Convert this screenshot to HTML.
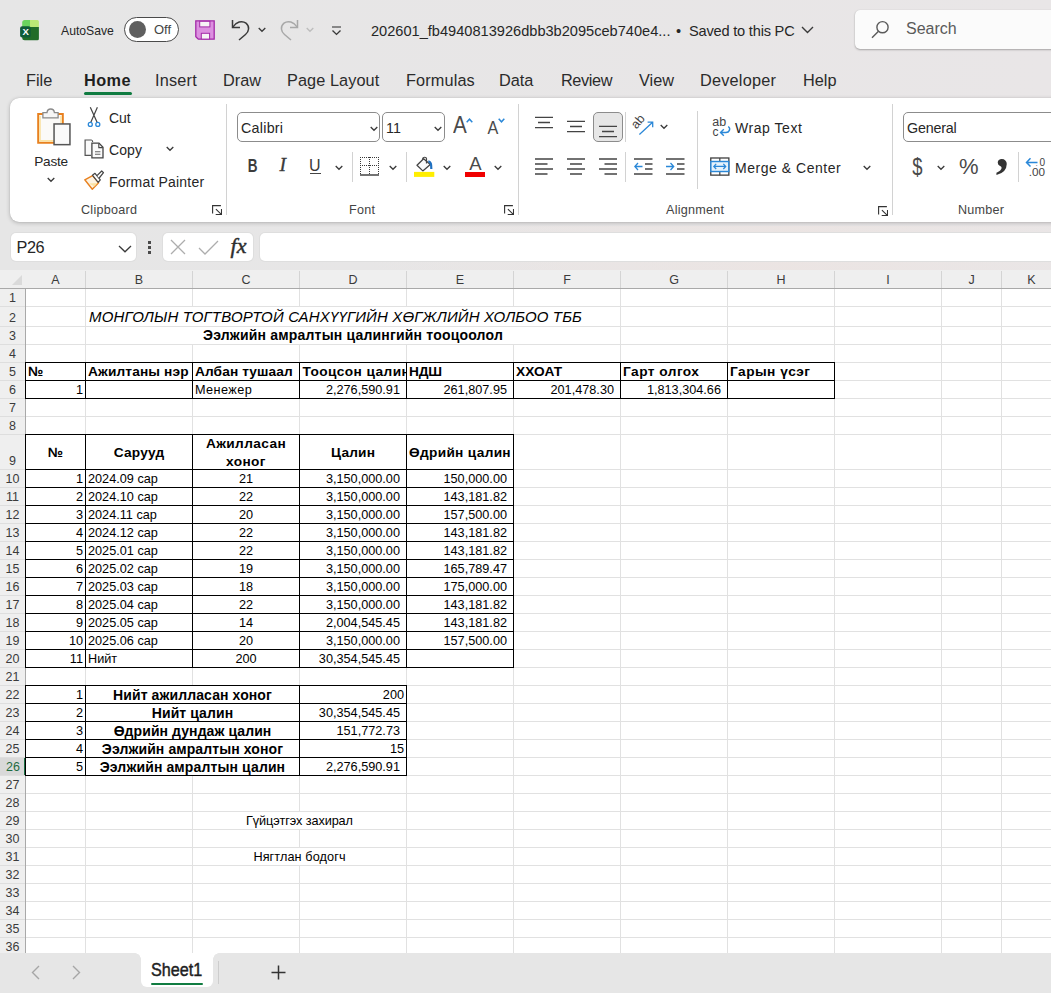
<!DOCTYPE html>
<html lang="mn">
<head>
<meta charset="utf-8">
<title>Excel</title>
<style>
html,body{margin:0;padding:0}
body{width:1051px;height:993px;overflow:hidden;background:linear-gradient(90deg,#e6e6e6,#e9e6e7);font-family:"Liberation Sans",sans-serif;position:relative;color:#262626}
#titlebar{position:absolute;left:0;top:0;width:1051px;height:60px}
#titlebar>*{position:absolute}
#xlicon{left:20px;top:19.800px}
#autosave{left:61px;top:22.800px;font-size:12.2px;line-height:16px;color:#262626}
#toggle{left:124px;top:17px;width:53px;height:23px;border:1px solid #4a4a4a;border-radius:13px;background:#fff}
#toggle b{position:absolute;left:4px;top:3px;width:17px;height:17px;border-radius:50%;background:#5f5f5f}
#toggle em{position:absolute;left:29px;top:4px;font-style:normal;font-size:13px;line-height:16px;color:#444}
#saveic{left:195px;top:20px}
#undoic{left:230.500px;top:18.500px}
#redoic{left:278.500px;top:18.500px}
#qatic{left:330.500px;top:26px}
#doctitle{left:371px;top:21.700px;font-size:14.600px;letter-spacing:0;line-height:18px;white-space:nowrap;color:#262626}
#search{left:855px;top:10px;width:220px;height:39px;background:#fbfbfb;border-radius:5px;box-shadow:0 1px 2px rgba(0,0,0,.28),0 0 1px rgba(0,0,0,.15)}
#search svg{position:absolute;left:16px;top:10px}
#search span{position:absolute;left:51px;top:9px;font-size:16px;line-height:20px;color:#5a5a5a}
#tabs{position:absolute;left:0;top:60px;width:1051px;height:38px}
#tabs span{position:absolute;top:9px;font-size:16.300px;line-height:22px;color:#2b2b2b;white-space:nowrap}
#tabs span.act{font-weight:bold;color:#1f1f1f}
#homeul{position:absolute;left:84px;top:32px;width:48px;height:3px;border-radius:2px;background:#107c41}
#doctitle em{font-style:normal;margin:0 3.800px 0 1.500px}
#doctitle b{font-weight:normal;letter-spacing:-.2px}
#ribbonbg{position:absolute;left:10px;top:98px;width:1070px;height:124px;background:#fff;border-radius:9px;box-shadow:0 1px 4px rgba(0,0,0,.22),0 0 1px rgba(0,0,0,.2)}
#rb{position:absolute;left:0;top:0;width:1051px;height:230px;overflow:hidden}
#rb>*{position:absolute}
#rb i{display:block}
.chev{position:absolute}
.rt{font-size:14px;line-height:18px;color:#262626;white-space:nowrap}
.gl{top:202.700px;font-size:12.600px;line-height:15px;color:#444;white-space:nowrap;letter-spacing:.25px}
.gs{top:104px;width:1px;height:111px;background:#d2d2d2}
.ss{width:1px;height:30px;background:#d2d2d2}
.box{border:1px solid #8c8c8c;border-radius:5px;background:#fff;box-sizing:border-box}
.box span{position:absolute;left:3px;top:5.600px;font-size:14.300px;line-height:18px;color:#262626;}
.selbox{border:1px solid #8c8c8c;border-radius:5px;background:#e6e6e6;box-sizing:border-box}
.ic{color:#3a3a3a;white-space:nowrap}
.thin{color:#4a4a4a}
#fbar{position:absolute;left:0;top:226px;width:1051px;height:44px;background:linear-gradient(90deg,rgba(236,228,226,0) 35%,rgba(236,228,226,.8) 75%,rgba(236,228,226,.2) 100%)}
#namebox{position:absolute;left:10.600px;top:7px;width:125.600px;height:28px;background:#fff;border-radius:5px;box-shadow:0 0 0 1px #dedede}
#namebox span{position:absolute;left:6px;top:4.700px;font-size:16.300px;line-height:19px;color:#262626;letter-spacing:-.45px}
#namebox svg{position:absolute;left:107px;top:12px}
#dots{position:absolute;left:147.700px;top:15px;width:4px;height:13px}
#dots i{display:block;width:3.500px;height:3.300px;background:#4a4a4a;margin-bottom:1.600px}
#fbtns{position:absolute;left:162.500px;top:7px;width:90.500px;height:28px;background:#fff;border-radius:5px;box-shadow:0 0 0 1px #dedede}
#fbtns svg{position:absolute}
#fx{position:absolute;left:68px;top:1px;-webkit-text-stroke:.45px #2e2e2e;font-family:"Liberation Serif",serif;font-style:italic;font-size:22px;line-height:24px;color:#2e2e2e;letter-spacing:0}
#fx em{font-style:italic}
#finput{position:absolute;left:260px;top:7px;width:820px;height:28px;background:#fff;border-radius:5px;box-shadow:0 0 0 1px #dedede}
#sbar{position:absolute;left:0;top:953px;width:1051px;height:40px;background:#e6e6e6}
#sbar>*{position:absolute}
#stab{left:141px;top:0;width:72px;height:34px;background:#fff;border-radius:0 0 6px 6px}
#stab span{position:absolute;left:9.800px;top:6.300px;font-size:18px;line-height:22px;color:#1f1f1f;-webkit-text-stroke:.45px #1f1f1f;letter-spacing:0;white-space:nowrap;transform:scaleX(.9);transform-origin:0 50%}
#stab i{position:absolute;left:10px;top:29.500px;width:52px;height:2px;background:#107c41;border-radius:1px}
#ssep{left:218px;top:8px;width:1px;height:23px;background:#cdcdcd}
#stab:before,#stab:after{content:"";position:absolute;top:0;width:6px;height:6px}
#stab:before{left:-6px;background:radial-gradient(circle at 0 100%,rgba(255,255,255,0) 5.500px,#fff 6px)}
#stab:after{right:-6px;background:radial-gradient(circle at 100% 100%,rgba(255,255,255,0) 5.500px,#fff 6px)}

#grid{position:absolute;left:0;top:270px;width:1051px;height:683px;background:#fff;overflow:hidden;font-family:"Liberation Sans",sans-serif;color:#000}
#grid i{position:absolute;display:block}
.gv{top:0;width:1px;height:683px;background:#e1e1e1}
.gh{left:0;height:1px;width:1051px;background:#e1e1e1}
#colhdr{position:absolute;z-index:2;left:0;top:0;width:1051px;height:18px;background:#efefef;border-bottom:1px solid #a9a9a9}
.ch{position:absolute;top:0;height:18px;line-height:21px;text-align:center;font-size:12.5px;color:#3b3b3b}
.chs{top:1px;width:1px;height:17px;background:#d4d4d4}
#selall{position:absolute;left:12px;top:4.700px}
#rowhdr{position:absolute;left:0;top:0;width:25px;height:683px;background:#efefef;border-right:1px solid #a9a9a9}
.rh{position:absolute;left:0;width:25px;text-align:center;font-size:12.5px;color:#3b3b3b}
.rh.sel{background:#d9d9d9;color:#1e6b41;box-shadow:inset -2px 0 0 #1e7145;width:26px}
.rhs{left:0;width:25px;height:1px;background:#dedede}
.c{position:absolute;white-space:nowrap;overflow:hidden;display:flex;align-items:flex-end}
.c span{display:block;width:100%}
.cb{font-size:12.7px;line-height:16px}
.tx{letter-spacing:0}
.ab{font-size:13.7px;font-weight:bold;line-height:16px}
.a14{font-size:14px}
.wrap{line-height:17.5px}
.ti{font-size:15px;letter-spacing:.15px;font-style:italic;line-height:18px;overflow:visible}
.ti span{padding-left:3px}
.lft span{text-align:left;padding-left:2px}
.rgt span{text-align:right;padding-right:2px}
.acc span{text-align:right;padding-right:6px}
.ctr span{text-align:center}
.mid{align-items:center;padding-top:1.4px;box-sizing:border-box}
.bg{background:#fff}
.bh{height:1px;background:#000}
.bv{width:1px;background:#000}
</style>
</head>
<body>
<div id="titlebar">
  <svg id="xlicon" width="20" height="21" viewBox="0 0 20 21">
    <path d="M2.200 2.500Q2.200 0 4.700 0H10V7H2.200Z" fill="#6ad45e"/>
    <path d="M10 0H17.400Q18.900 0 18.900 1.500V7H10Z" fill="#bce876"/>
    <path d="M2.200 7H18.900V18.700Q18.900 20.200 17.400 20.200H4.700Q2.200 20.200 2.200 17.700Z" fill="#216c28"/>
    <rect x=".1" y="6.300" width="10.600" height="11.200" rx="2" fill="#0f5c38"/>
    <text x="5.700" y="15.200" text-anchor="middle" font-family="Liberation Sans,sans-serif" font-weight="bold" font-size="9.600" fill="#fff">X</text>
  </svg>
  <span id="autosave">AutoSave</span>
  <span id="toggle"><b></b><em>Off</em></span>
  <svg id="saveic" width="21" height="21" viewBox="0 0 21 21">
    <path d="M.8 .8H19.200V19.200H3.300L.8 16.700Z" fill="#dc90e0" stroke="#a32aa8" stroke-width="1.300" stroke-linejoin="miter"/>
    <rect x="4.700" y="1.300" width="10.200" height="5.600" fill="#f6f3f6" stroke="#a32aa8" stroke-width="1"/>
    <rect x="6.300" y="13.300" width="8.300" height="5.800" fill="#f6f3f6" stroke="#a32aa8" stroke-width="1"/>
  </svg>
  <svg id="undoic" width="20" height="22" viewBox="0 0 20 22">
    <path d="M1.500 1V8.500H9" fill="none" stroke="#3a3a3a" stroke-width="1.500"/>
    <path d="M1.800 8.200C5 3 11 1 15 4.200C19 7.500 18 12.500 14.500 15.500L8 21" fill="none" stroke="#3a3a3a" stroke-width="1.500"/>
  </svg>
  <svg class="chev" style="left:258px;top:27px" width="8" height="6" viewBox="0 0 8 6"><path d="M.7 1L4 4.300L7.300 1" fill="none" stroke="#3a3a3a" stroke-width="1.300"/></svg>
  <svg id="redoic" width="20" height="22" viewBox="0 0 20 22">
    <path d="M18.500 1V8.500H11" fill="none" stroke="#a8a8a8" stroke-width="1.500"/>
    <path d="M18.200 8.200C15 3 9 1 5 4.200C1 7.500 2 12.500 5.500 15.500L12 21" fill="none" stroke="#a8a8a8" stroke-width="1.500"/>
  </svg>
  <svg class="chev" style="left:306px;top:27px" width="8" height="6" viewBox="0 0 8 6"><path d="M.7 1L4 4.300L7.300 1" fill="none" stroke="#bdbdbd" stroke-width="1.300"/></svg>
  <svg id="qatic" width="11" height="10" viewBox="0 0 11 10"><path d="M1 1H10" stroke="#3a3a3a" stroke-width="1.100"/><path d="M1.500 4.600L5.500 8.400L9.500 4.600" fill="none" stroke="#3a3a3a" stroke-width="1.400"/></svg>
  <span id="doctitle">202601_fb4940813926dbb3b2095ceb740e4... <em>•</em> <b>Saved to this PC</b></span>
  <svg class="chev" style="left:801px;top:26px" width="13" height="8" viewBox="0 0 13 8"><path d="M1 1L6.500 6.500L12 1" fill="none" stroke="#3a3a3a" stroke-width="1.400"/></svg>
  <div id="search">
    <svg width="19" height="19" viewBox="0 0 19 19"><circle cx="11.500" cy="7.200" r="5.600" fill="none" stroke="#5a5a5a" stroke-width="1.400"/><path d="M7.500 11.200L1 17.800" stroke="#5a5a5a" stroke-width="1.400"/></svg>
    <span>Search</span>
  </div>
</div>
<div id="tabs">
  <span style="left:26px">File</span>
  <span class="act" style="left:84px;letter-spacing:.4px">Home</span>
  <span style="left:155px;letter-spacing:.2px">Insert</span>
  <span style="left:223px">Draw</span>
  <span style="left:287px;letter-spacing:.08px">Page Layout</span>
  <span style="left:406px;letter-spacing:.12px">Formulas</span>
  <span style="left:499px">Data</span>
  <span style="left:561px;letter-spacing:-.4px">Review</span>
  <span style="left:639px">View</span>
  <span style="left:700px;letter-spacing:.2px">Developer</span>
  <span style="left:803px">Help</span>
  <i id="homeul"></i>
</div>
<div id="ribbonbg"></div>
<div id="rb">
  <!-- Clipboard -->
  <svg style="left:36px;top:106px" width="36" height="41" viewBox="0 0 36 41">
    <path d="M2.200 8H26.800V36.700H2.200Z" fill="#fbfaf8" stroke="#e8801f" stroke-width="2"/>
    <path d="M4 10V34.900H20M25 10V17" fill="none" stroke="#fbe2a2" stroke-width="1.600"/>
    <path d="M6.900 11.800V6.600H11C11.500 1.800 17.900 1.800 18.400 6.600H22.100V11.800Z" fill="#f6f6f6" stroke="#8a8a8a" stroke-width="1.300"/>
    <rect x="18.050" y="17.950" width="15.900" height="20.700" fill="#fafafa" stroke="#555" stroke-width="1.500"/>
  </svg>
  <span class="rt" style="left:34.300px;top:153px;font-size:13.600px;letter-spacing:-.25px">Paste</span>
  <svg class="chev" style="left:46.500px;top:176.500px" width="8" height="6" viewBox="0 0 8 6"><path d="M.7 1L4 4.300L7.300 1" fill="none" stroke="#3a3a3a" stroke-width="1.300"/></svg>
  <svg style="left:86px;top:106px" width="16" height="22" viewBox="0 0 16 22">
    <path d="M4.300 1.200L11.200 16.400M11.400 1.200L4.700 16.400" stroke="#444" stroke-width="1.200" fill="none"/>
    <circle cx="4.300" cy="18.400" r="2" fill="none" stroke="#2b88d8" stroke-width="1.300"/>
    <circle cx="11.800" cy="18.400" r="2" fill="none" stroke="#2b88d8" stroke-width="1.300"/>
  </svg>
  <span class="rt" style="left:109px;top:109px;letter-spacing:-.13px">Cut</span>
  <svg style="left:83px;top:138px" width="22" height="22" viewBox="0 0 22 22">
    <path d="M8 17.400H2.100V2H8.300Q9.600 2 9.700 4" fill="#fafafa" stroke="#555" stroke-width="1.200"/>
    <path d="M8.900 5.100H16L20 9.300V19.900H8.900Z" fill="#fafafa" stroke="#444" stroke-width="1.300"/>
    <path d="M15.800 5.400V9.600H19.800" fill="none" stroke="#444" stroke-width="1.100"/>
    <path d="M12 13.700H17.400M12 16.300H17.400" stroke="#666" stroke-width="1.100"/>
  </svg>
  <span class="rt" style="left:109px;top:141px;letter-spacing:.1px">Copy</span>
  <svg class="chev" style="left:166px;top:146px" width="8" height="6" viewBox="0 0 8 6"><path d="M.7 1L4 4.300L7.300 1" fill="none" stroke="#3a3a3a" stroke-width="1.300"/></svg>
  <svg style="left:84px;top:170px" width="21" height="21" viewBox="0 0 21 21">
    <path d="M.8 9.800L8.600 5.600L14.600 12.700L8.300 19.200Z" fill="#fdf3e2" stroke="#e8801f" stroke-width="1.400" stroke-linejoin="round"/>
    <path d="M5 13.500L10.500 16.500L13.500 13Z" fill="#fbe2a2"/>
    <path d="M8.400 5.200L11 3.300L16.300 9.800L14.200 12.300Z" fill="#fff" stroke="#444" stroke-width="1.200" stroke-linejoin="round"/>
    <path d="M13 5.700L17.700 1L19.500 2.700L15.200 8" fill="#fff" stroke="#444" stroke-width="1.200" stroke-linejoin="round"/>
  </svg>
  <span class="rt" style="left:109px;top:173px;letter-spacing:.19px">Format Painter</span>
  <span class="gl" style="left:81px">Clipboard</span>
  <svg class="dl" style="left:212px;top:205px" width="10" height="10" viewBox="0 0 10 10"><path d="M.6 8.600V.6H8.900" fill="none" stroke="#333" stroke-width="1.100"/><path d="M3.900 4.100L9.300 9.300M9.500 4.100V9.500H3.700" fill="none" stroke="#333" stroke-width="1.100"/></svg>
  <i class="gs" style="left:226px"></i>
  <!-- Font -->
  <div class="box" style="left:237px;top:112px;width:143px;height:29.500px"><span style="letter-spacing:.25px">Calibri</span>
    <svg class="chev" style="left:132px;top:12.500px" width="8" height="6" viewBox="0 0 8 6"><path d="M.7 1L4 4.300L7.300 1" fill="none" stroke="#3a3a3a" stroke-width="1.300"/></svg></div>
  <div class="box" style="left:382px;top:112px;width:62.500px;height:29.500px"><span>11</span>
    <svg class="chev" style="left:51px;top:12.500px" width="8" height="6" viewBox="0 0 8 6"><path d="M.7 1L4 4.300L7.300 1" fill="none" stroke="#3a3a3a" stroke-width="1.300"/></svg></div>
  <span class="ic thin" style="left:452.300px;top:112px;font-size:23.700px;line-height:26px;transform:scaleX(.87)">A</span>
  <svg style="left:465.500px;top:117.500px" width="7" height="5" viewBox="0 0 7 5"><path d="M.7 4.200L3.500 1.200L6.300 4.200" fill="none" stroke="#2b88d8" stroke-width="1.500"/></svg>
  <span class="ic thin" style="left:486.800px;top:116.700px;font-size:18px;line-height:22px;transform:scaleX(.9)">A</span>
  <svg style="left:497.500px;top:117.500px" width="7" height="5" viewBox="0 0 7 5"><path d="M.7 .8L3.500 3.800L6.300 .8" fill="none" stroke="#2b88d8" stroke-width="1.500"/></svg>
  <span class="ic" style="left:245.500px;top:154.500px;font-size:18.300px;line-height:22px;font-weight:bold;transform:scaleX(.74);color:#3d3d3d">B</span>
  <span class="ic" style="left:279.500px;top:153.300px;font-size:19.500px;line-height:24px;font-style:italic;font-family:'Liberation Serif',serif;-webkit-text-stroke:.3px #3a3a3a">I</span>
  <span class="ic" style="left:309px;top:156px;font-size:16px;line-height:20px">U</span>
  <i style="left:309.600px;top:172.800px;width:11.400px;height:1.400px;background:#444"></i>
  <svg class="chev" style="left:335px;top:165px" width="8" height="6" viewBox="0 0 8 6"><path d="M.7 1L4 4.300L7.300 1" fill="none" stroke="#3a3a3a" stroke-width="1.300"/></svg>
  <i class="ss" style="left:352px;top:152px"></i>
  <svg style="left:360px;top:157px" width="19" height="19" viewBox="0 0 19 19">
    <path d="M0 .5H19M0 8.500H19M.5 0V17M9.500 0V17M18.500 0V17" fill="none" stroke="#3a3a3a" stroke-width="1" stroke-dasharray="1 1"/>
    <path d="M0 18H19" stroke="#444" stroke-width="1.500"/>
  </svg>
  <svg class="chev" style="left:389px;top:165px" width="8" height="6" viewBox="0 0 8 6"><path d="M.7 1L4 4.300L7.300 1" fill="none" stroke="#3a3a3a" stroke-width="1.300"/></svg>
  <i class="ss" style="left:406px;top:152px"></i>
  <svg style="left:414px;top:156px" width="21" height="22" viewBox="0 0 21 22">
    <path d="M3 9.300L9.600 2.800L16.300 8.400L8.800 14.900Z" fill="#fafafa" stroke="#444" stroke-width="1.300" stroke-linejoin="round"/>
    <path d="M8.700 3.800V2.800C8.700 .7 12.500 .7 12.500 2.800V7.400" fill="none" stroke="#444" stroke-width="1.200"/>
    <path d="M14.300 5.300C16.800 5.900 17.400 7.600 17.300 13" fill="none" stroke="#1e6fc0" stroke-width="2.200"/>
    <rect x="0" y="15.900" width="20.300" height="5" fill="#ffee00"/>
  </svg>
  <svg class="chev" style="left:443px;top:165px" width="8" height="6" viewBox="0 0 8 6"><path d="M.7 1L4 4.300L7.300 1" fill="none" stroke="#3a3a3a" stroke-width="1.300"/></svg>
  <span class="ic thin" style="left:469.300px;top:153.400px;font-size:18.500px;line-height:22px">A</span>
  <i style="left:465px;top:172px;width:20.300px;height:5px;background:#f00000"></i>
  <svg class="chev" style="left:494px;top:165px" width="8" height="6" viewBox="0 0 8 6"><path d="M.7 1L4 4.300L7.300 1" fill="none" stroke="#3a3a3a" stroke-width="1.300"/></svg>
  <span class="gl" style="left:349px">Font</span>
  <svg class="dl" style="left:504px;top:205px" width="10" height="10" viewBox="0 0 10 10"><path d="M.6 8.600V.6H8.900" fill="none" stroke="#333" stroke-width="1.100"/><path d="M3.900 4.100L9.300 9.300M9.500 4.100V9.500H3.700" fill="none" stroke="#333" stroke-width="1.100"/></svg>
  <i class="gs" style="left:518px"></i>
  <!-- Alignment -->
  <svg style="left:535px;top:116px" width="18" height="14" viewBox="0 0 18 14"><path d="M0 1.300H18M3 6.500H15M0 11.700H18" stroke="#444" stroke-width="1.300"/></svg>
  <svg style="left:567px;top:120px" width="18" height="14" viewBox="0 0 18 14"><path d="M0 1.300H18M3 6.500H15M0 11.700H18" stroke="#444" stroke-width="1.300"/></svg>
  <div class="selbox" style="left:593px;top:112px;width:30px;height:29.500px"></div>
  <svg style="left:599px;top:125px" width="18" height="14" viewBox="0 0 18 14"><path d="M0 1.300H18M3 6.500H15M0 11.700H18" stroke="#444" stroke-width="1.300"/></svg>
  <i class="ss" style="left:625px;top:112px"></i>
  <svg style="left:632px;top:115px" width="23" height="23" viewBox="0 0 23 23">
    <path d="M7.400 19.600L20.600 7.300M15.600 7.200H20.700V12.300" fill="none" stroke="#2b88d8" stroke-width="1.300"/>
    <text x="0" y="0" transform="translate(4.600 14.600) rotate(-50)" font-family="Liberation Sans,sans-serif" font-size="12.500" fill="#444">ab</text>
  </svg>
  <svg class="chev" style="left:660px;top:124px" width="8" height="6" viewBox="0 0 8 6"><path d="M.7 1L4 4.300L7.300 1" fill="none" stroke="#3a3a3a" stroke-width="1.300"/></svg>
  <svg style="left:535px;top:158px" width="18" height="17" viewBox="0 0 18 17"><path d="M0 1H18M0 6H12.500M0 11H18M0 16H12.500" stroke="#444" stroke-width="1.300"/></svg>
  <svg style="left:567px;top:158px" width="18" height="17" viewBox="0 0 18 17"><path d="M0 1H18M3 6H15M0 11H18M3 16H15" stroke="#444" stroke-width="1.300"/></svg>
  <svg style="left:599px;top:158px" width="18" height="17" viewBox="0 0 18 17"><path d="M0 1H18M5.500 6H18M0 11H18M5.500 16H18" stroke="#444" stroke-width="1.300"/></svg>
  <i class="ss" style="left:625px;top:152px"></i>
  <svg style="left:634px;top:158px" width="19" height="17" viewBox="0 0 19 17"><path d="M0 1H18.500M11 6H18.500M11 11H18.500M0 16H18.500" stroke="#444" stroke-width="1.300"/><path d="M8.500 8.500H.8M4 5L.8 8.500L4 12" fill="none" stroke="#2b88d8" stroke-width="1.300"/></svg>
  <svg style="left:666px;top:158px" width="19" height="17" viewBox="0 0 19 17"><path d="M0 1H18.500M11 6H18.500M11 11H18.500M0 16H18.500" stroke="#444" stroke-width="1.300"/><path d="M0 8.500H7.700M4.500 5L7.700 8.500L4.500 12" fill="none" stroke="#2b88d8" stroke-width="1.300"/></svg>
  <i class="ss" style="left:697px;top:111px;height:78px"></i>
  <svg style="left:712px;top:117px" width="20" height="21" viewBox="0 0 20 21">
    <text x="0.300" y="9" font-family="Liberation Sans,sans-serif" font-size="12.500" fill="#444">ab</text>
    <text x="0.500" y="18.500" font-family="Liberation Sans,sans-serif" font-size="12" fill="#444">c</text>
    <path d="M16.200 9.500C19 11.500 17.500 15.800 13.500 15.500H8.500M11.800 12.200L8.500 15.500L11.800 18.800" fill="none" stroke="#2b88d8" stroke-width="1.400"/>
  </svg>
  <span class="rt" style="left:735px;top:119px;letter-spacing:.54px">Wrap Text</span>
  <svg style="left:709.500px;top:157px" width="20" height="19.500" viewBox="0 0 21 20">
    <rect x=".8" y=".8" width="19" height="18" fill="#fff" stroke="#444" stroke-width="1.400"/>
    <path d="M10.300 .8V4.500M10.300 15V18.800" stroke="#444" stroke-width="1.300"/>
    <rect x=".9" y="4.500" width="18.800" height="10.500" fill="#e6f2fb" stroke="#2b88d8" stroke-width="1.500"/>
    <path d="M4 9.700H16.500M6.500 7L4 9.700L6.500 12.400M14 7L16.500 9.700L14 12.400" fill="none" stroke="#2b88d8" stroke-width="1.300"/>
  </svg>
  <span class="rt" style="left:735px;top:159px;letter-spacing:.53px">Merge &amp; Center</span>
  <svg class="chev" style="left:863px;top:165px" width="8" height="6" viewBox="0 0 8 6"><path d="M.7 1L4 4.300L7.300 1" fill="none" stroke="#3a3a3a" stroke-width="1.300"/></svg>
  <span class="gl" style="left:666px">Alignment</span>
  <svg class="dl" style="left:878px;top:206px" width="10" height="10" viewBox="0 0 10 10"><path d="M.6 8.600V.6H8.900" fill="none" stroke="#333" stroke-width="1.100"/><path d="M3.900 4.100L9.300 9.300M9.500 4.100V9.500H3.700" fill="none" stroke="#333" stroke-width="1.100"/></svg>
  <i class="gs" style="left:892px"></i>
  <!-- Number -->
  <div class="box" style="left:903px;top:112px;width:170px;height:29.500px"><span style="letter-spacing:-.2px">General</span></div>
  <span class="ic thin" style="left:910.500px;top:153px;font-size:23px;line-height:28px;transform:scaleX(.8)">$</span>
  <svg class="chev" style="left:937px;top:165px" width="8" height="6" viewBox="0 0 8 6"><path d="M.7 1L4 4.300L7.300 1" fill="none" stroke="#3a3a3a" stroke-width="1.300"/></svg>
  <span class="ic thin" style="left:959px;top:154px;font-size:22px;line-height:26px">%</span>
  <span class="ic" style="left:995.800px;top:119.600px;font-size:52px;line-height:60px;font-family:'Liberation Serif',serif;font-weight:bold;color:#333">,</span>
  <i class="ss" style="left:1018px;top:152px"></i>
  <svg style="left:1025px;top:155px" width="24" height="24" viewBox="0 0 24 24">
    <path d="M12.500 7.400H1.500M5.500 3.200L1.500 7.400L5.500 11.600" fill="none" stroke="#2b88d8" stroke-width="1.500"/>
    <text x="14.600" y="10.700" font-family="Liberation Sans,sans-serif" font-size="11.800" textLength="5.600" lengthAdjust="spacingAndGlyphs" fill="#444">0</text>
    <text x="10.600" y="10.700" font-family="Liberation Sans,sans-serif" font-size="8" fill="#666">.</text>
    <text x="3.800" y="21" font-family="Liberation Sans,sans-serif" font-size="11.800" textLength="16.300" lengthAdjust="spacingAndGlyphs" fill="#444">.00</text>
  </svg>
  <span class="gl" style="left:958px">Number</span>
</div>
<div id="fbar">
  <div id="namebox"><span>P26</span>
    <svg width="14" height="8" viewBox="0 0 14 8"><path d="M1 1L7 6.800L13 1" fill="none" stroke="#3a3a3a" stroke-width="1.300"/></svg></div>
  <span id="dots"><i></i><i></i><i></i></span>
  <div id="fbtns">
    <svg style="left:7.300px;top:6.200px" width="16" height="16" viewBox="0 0 16 16"><path d="M1 1L15 15M15 1L1 15" stroke="#adadad" stroke-width="1.300"/></svg>
    <svg style="left:35px;top:6.500px" width="21" height="15" viewBox="0 0 21 15"><path d="M1 8L7 14L20 1" fill="none" stroke="#adadad" stroke-width="1.300"/></svg>
    <span id="fx"><em>f</em>x</span>
  </div>
  <div id="finput"></div>
</div>
<div id="grid">
<i class="gv" style="left:85px"></i>
<i class="gv" style="left:192px"></i>
<i class="gv" style="left:299px"></i>
<i class="gv" style="left:406px"></i>
<i class="gv" style="left:513px"></i>
<i class="gv" style="left:620px"></i>
<i class="gv" style="left:727px"></i>
<i class="gv" style="left:834px"></i>
<i class="gv" style="left:941px"></i>
<i class="gv" style="left:1001px"></i>
<i class="gh" style="top:36px"></i>
<i class="gh" style="top:56px"></i>
<i class="gh" style="top:74px"></i>
<i class="gh" style="top:92px"></i>
<i class="gh" style="top:110px"></i>
<i class="gh" style="top:128px"></i>
<i class="gh" style="top:146px"></i>
<i class="gh" style="top:164px"></i>
<i class="gh" style="top:199px"></i>
<i class="gh" style="top:217px"></i>
<i class="gh" style="top:235px"></i>
<i class="gh" style="top:253px"></i>
<i class="gh" style="top:271px"></i>
<i class="gh" style="top:289px"></i>
<i class="gh" style="top:307px"></i>
<i class="gh" style="top:325px"></i>
<i class="gh" style="top:343px"></i>
<i class="gh" style="top:361px"></i>
<i class="gh" style="top:379px"></i>
<i class="gh" style="top:397px"></i>
<i class="gh" style="top:415px"></i>
<i class="gh" style="top:433px"></i>
<i class="gh" style="top:451px"></i>
<i class="gh" style="top:469px"></i>
<i class="gh" style="top:487px"></i>
<i class="gh" style="top:505px"></i>
<i class="gh" style="top:523px"></i>
<i class="gh" style="top:541px"></i>
<i class="gh" style="top:559px"></i>
<i class="gh" style="top:577px"></i>
<i class="gh" style="top:595px"></i>
<i class="gh" style="top:613px"></i>
<i class="gh" style="top:631px"></i>
<i class="gh" style="top:649px"></i>
<i class="gh" style="top:667px"></i>
<i class="gh" style="top:685px"></i>
<div id="colhdr">
<span class="ch" style="left:26px;width:59px">A</span>
<i class="chs" style="left:85px"></i>
<span class="ch" style="left:86px;width:106px">B</span>
<i class="chs" style="left:192px"></i>
<span class="ch" style="left:193px;width:106px">C</span>
<i class="chs" style="left:299px"></i>
<span class="ch" style="left:300px;width:106px">D</span>
<i class="chs" style="left:406px"></i>
<span class="ch" style="left:407px;width:106px">E</span>
<i class="chs" style="left:513px"></i>
<span class="ch" style="left:514px;width:106px">F</span>
<i class="chs" style="left:620px"></i>
<span class="ch" style="left:621px;width:106px">G</span>
<i class="chs" style="left:727px"></i>
<span class="ch" style="left:728px;width:106px">H</span>
<i class="chs" style="left:834px"></i>
<span class="ch" style="left:835px;width:106px">I</span>
<i class="chs" style="left:941px"></i>
<span class="ch" style="left:942px;width:59px">J</span>
<i class="chs" style="left:1001px"></i>
<span class="ch" style="left:1002px;width:59px">K</span>
<i class="chs" style="left:1061px"></i>
<svg id="selall" width="10" height="10" viewBox="0 0 10 10"><path d="M10 0V10H0Z" fill="#dadada"/></svg>
</div>
<div id="rowhdr">
<span class="rh" style="top:19px;height:17px;line-height:19px">1</span>
<i class="rhs" style="top:36px"></i>
<span class="rh" style="top:37px;height:19px;line-height:23px">2</span>
<i class="rhs" style="top:56px"></i>
<span class="rh" style="top:57px;height:17px;line-height:19px">3</span>
<i class="rhs" style="top:74px"></i>
<span class="rh" style="top:75px;height:17px;line-height:19px">4</span>
<i class="rhs" style="top:92px"></i>
<span class="rh" style="top:93px;height:17px;line-height:19px">5</span>
<i class="rhs" style="top:110px"></i>
<span class="rh" style="top:111px;height:17px;line-height:19px">6</span>
<i class="rhs" style="top:128px"></i>
<span class="rh" style="top:129px;height:17px;line-height:19px">7</span>
<i class="rhs" style="top:146px"></i>
<span class="rh" style="top:147px;height:17px;line-height:19px">8</span>
<i class="rhs" style="top:164px"></i>
<span class="rh" style="top:165px;height:34px;line-height:53px">9</span>
<i class="rhs" style="top:199px"></i>
<span class="rh" style="top:200px;height:17px;line-height:19px">10</span>
<i class="rhs" style="top:217px"></i>
<span class="rh" style="top:218px;height:17px;line-height:19px">11</span>
<i class="rhs" style="top:235px"></i>
<span class="rh" style="top:236px;height:17px;line-height:19px">12</span>
<i class="rhs" style="top:253px"></i>
<span class="rh" style="top:254px;height:17px;line-height:19px">13</span>
<i class="rhs" style="top:271px"></i>
<span class="rh" style="top:272px;height:17px;line-height:19px">14</span>
<i class="rhs" style="top:289px"></i>
<span class="rh" style="top:290px;height:17px;line-height:19px">15</span>
<i class="rhs" style="top:307px"></i>
<span class="rh" style="top:308px;height:17px;line-height:19px">16</span>
<i class="rhs" style="top:325px"></i>
<span class="rh" style="top:326px;height:17px;line-height:19px">17</span>
<i class="rhs" style="top:343px"></i>
<span class="rh" style="top:344px;height:17px;line-height:19px">18</span>
<i class="rhs" style="top:361px"></i>
<span class="rh" style="top:362px;height:17px;line-height:19px">19</span>
<i class="rhs" style="top:379px"></i>
<span class="rh" style="top:380px;height:17px;line-height:19px">20</span>
<i class="rhs" style="top:397px"></i>
<span class="rh" style="top:398px;height:17px;line-height:19px">21</span>
<i class="rhs" style="top:415px"></i>
<span class="rh" style="top:416px;height:17px;line-height:19px">22</span>
<i class="rhs" style="top:433px"></i>
<span class="rh" style="top:434px;height:17px;line-height:19px">23</span>
<i class="rhs" style="top:451px"></i>
<span class="rh" style="top:452px;height:17px;line-height:19px">24</span>
<i class="rhs" style="top:469px"></i>
<span class="rh" style="top:470px;height:17px;line-height:19px">25</span>
<i class="rhs" style="top:487px"></i>
<span class="rh sel" style="top:488px;height:17px;line-height:19px">26</span>
<i class="rhs" style="top:505px"></i>
<span class="rh" style="top:506px;height:17px;line-height:19px">27</span>
<i class="rhs" style="top:523px"></i>
<span class="rh" style="top:524px;height:17px;line-height:19px">28</span>
<i class="rhs" style="top:541px"></i>
<span class="rh" style="top:542px;height:17px;line-height:19px">29</span>
<i class="rhs" style="top:559px"></i>
<span class="rh" style="top:560px;height:17px;line-height:19px">30</span>
<i class="rhs" style="top:577px"></i>
<span class="rh" style="top:578px;height:17px;line-height:19px">31</span>
<i class="rhs" style="top:595px"></i>
<span class="rh" style="top:596px;height:17px;line-height:19px">32</span>
<i class="rhs" style="top:613px"></i>
<span class="rh" style="top:614px;height:17px;line-height:19px">33</span>
<i class="rhs" style="top:631px"></i>
<span class="rh" style="top:632px;height:17px;line-height:19px">34</span>
<i class="rhs" style="top:649px"></i>
<span class="rh" style="top:650px;height:17px;line-height:19px">35</span>
<i class="rhs" style="top:667px"></i>
<span class="rh" style="top:668px;height:17px;line-height:19px">36</span>
<i class="rhs" style="top:685px"></i>
</div>
<div class="c ti bg" style="left:86px;top:37px;width:534px;height:19px;"><span>МОНГОЛЫН ТОГТВОРТОЙ САНХҮҮГИЙН ХӨГЖЛИЙН ХОЛБОО ТББ</span></div>
<div class="c ab a14 ctr bg" style="left:86px;top:57px;width:534px;height:17px;padding-bottom:.8px;box-sizing:border-box;letter-spacing:0.19px;"><span>Ээлжийн амралтын цалингийн тооцоолол</span></div>
<div class="c ab lft" style="left:26px;top:93px;width:59px;height:17px;letter-spacing:0.00px;"><span>№</span></div>
<div class="c ab lft" style="left:86px;top:93px;width:106px;height:17px;letter-spacing:0.15px;"><span>Ажилтаны нэр</span></div>
<div class="c ab lft" style="left:193px;top:93px;width:106px;height:17px;letter-spacing:0.11px;"><span>Албан тушаал</span></div>
<div class="c ab lft" style="left:300px;top:93px;width:106px;height:17px;padding-left:.6px;letter-spacing:0.43px;"><span>Тооцсон цалин</span></div>
<div class="c ab lft" style="left:407px;top:93px;width:106px;height:17px;letter-spacing:-0.16px;"><span>НДШ</span></div>
<div class="c ab lft" style="left:514px;top:93px;width:106px;height:17px;letter-spacing:0.06px;"><span>ХХОАТ</span></div>
<div class="c ab lft" style="left:621px;top:93px;width:106px;height:17px;letter-spacing:0.47px;"><span>Гарт олгох</span></div>
<div class="c ab lft" style="left:728px;top:93px;width:106px;height:17px;letter-spacing:0.47px;"><span>Гарын үсэг</span></div>
<div class="c cb rgt" style="left:26px;top:111px;width:59px;height:17px;"><span>1</span></div>
<div class="c cb lft" style="left:193px;top:111px;width:106px;height:17px;letter-spacing:0.41px;"><span>Менежер</span></div>
<div class="c cb acc" style="left:300px;top:111px;width:106px;height:17px;"><span>2,276,590.91</span></div>
<div class="c cb acc" style="left:407px;top:111px;width:106px;height:17px;"><span>261,807.95</span></div>
<div class="c cb acc" style="left:514px;top:111px;width:106px;height:17px;"><span>201,478.30</span></div>
<div class="c cb acc" style="left:621px;top:111px;width:106px;height:17px;"><span>1,813,304.66</span></div>
<div class="c ab ctr mid" style="left:26px;top:165px;width:59px;height:34px;letter-spacing:0.00px;"><span>№</span></div>
<div class="c ab ctr mid" style="left:86px;top:165px;width:106px;height:34px;letter-spacing:0.18px;"><span>Сарууд</span></div>
<div class="c ab ctr mid wrap" style="left:193px;top:165px;width:106px;height:34px;letter-spacing:0.38px;"><span>Ажилласан<br>хоног</span></div>
<div class="c ab ctr mid" style="left:300px;top:165px;width:106px;height:34px;letter-spacing:0.10px;"><span>Цалин</span></div>
<div class="c ab ctr mid" style="left:407px;top:165px;width:106px;height:34px;letter-spacing:0.31px;"><span>Өдрийн цалин</span></div>
<div class="c cb rgt" style="left:26px;top:200px;width:59px;height:17px;"><span>1</span></div>
<div class="c cb tx lft" style="left:86px;top:200px;width:106px;height:17px;"><span>2024.09 сар</span></div>
<div class="c cb ctr" style="left:193px;top:200px;width:106px;height:17px;"><span>21</span></div>
<div class="c cb acc" style="left:300px;top:200px;width:106px;height:17px;"><span>3,150,000.00</span></div>
<div class="c cb acc" style="left:407px;top:200px;width:106px;height:17px;"><span>150,000.00</span></div>
<div class="c cb rgt" style="left:26px;top:218px;width:59px;height:17px;"><span>2</span></div>
<div class="c cb tx lft" style="left:86px;top:218px;width:106px;height:17px;"><span>2024.10 сар</span></div>
<div class="c cb ctr" style="left:193px;top:218px;width:106px;height:17px;"><span>22</span></div>
<div class="c cb acc" style="left:300px;top:218px;width:106px;height:17px;"><span>3,150,000.00</span></div>
<div class="c cb acc" style="left:407px;top:218px;width:106px;height:17px;"><span>143,181.82</span></div>
<div class="c cb rgt" style="left:26px;top:236px;width:59px;height:17px;"><span>3</span></div>
<div class="c cb tx lft" style="left:86px;top:236px;width:106px;height:17px;"><span>2024.11 сар</span></div>
<div class="c cb ctr" style="left:193px;top:236px;width:106px;height:17px;"><span>20</span></div>
<div class="c cb acc" style="left:300px;top:236px;width:106px;height:17px;"><span>3,150,000.00</span></div>
<div class="c cb acc" style="left:407px;top:236px;width:106px;height:17px;"><span>157,500.00</span></div>
<div class="c cb rgt" style="left:26px;top:254px;width:59px;height:17px;"><span>4</span></div>
<div class="c cb tx lft" style="left:86px;top:254px;width:106px;height:17px;"><span>2024.12 сар</span></div>
<div class="c cb ctr" style="left:193px;top:254px;width:106px;height:17px;"><span>22</span></div>
<div class="c cb acc" style="left:300px;top:254px;width:106px;height:17px;"><span>3,150,000.00</span></div>
<div class="c cb acc" style="left:407px;top:254px;width:106px;height:17px;"><span>143,181.82</span></div>
<div class="c cb rgt" style="left:26px;top:272px;width:59px;height:17px;"><span>5</span></div>
<div class="c cb tx lft" style="left:86px;top:272px;width:106px;height:17px;"><span>2025.01 сар</span></div>
<div class="c cb ctr" style="left:193px;top:272px;width:106px;height:17px;"><span>22</span></div>
<div class="c cb acc" style="left:300px;top:272px;width:106px;height:17px;"><span>3,150,000.00</span></div>
<div class="c cb acc" style="left:407px;top:272px;width:106px;height:17px;"><span>143,181.82</span></div>
<div class="c cb rgt" style="left:26px;top:290px;width:59px;height:17px;"><span>6</span></div>
<div class="c cb tx lft" style="left:86px;top:290px;width:106px;height:17px;"><span>2025.02 сар</span></div>
<div class="c cb ctr" style="left:193px;top:290px;width:106px;height:17px;"><span>19</span></div>
<div class="c cb acc" style="left:300px;top:290px;width:106px;height:17px;"><span>3,150,000.00</span></div>
<div class="c cb acc" style="left:407px;top:290px;width:106px;height:17px;"><span>165,789.47</span></div>
<div class="c cb rgt" style="left:26px;top:308px;width:59px;height:17px;"><span>7</span></div>
<div class="c cb tx lft" style="left:86px;top:308px;width:106px;height:17px;"><span>2025.03 сар</span></div>
<div class="c cb ctr" style="left:193px;top:308px;width:106px;height:17px;"><span>18</span></div>
<div class="c cb acc" style="left:300px;top:308px;width:106px;height:17px;"><span>3,150,000.00</span></div>
<div class="c cb acc" style="left:407px;top:308px;width:106px;height:17px;"><span>175,000.00</span></div>
<div class="c cb rgt" style="left:26px;top:326px;width:59px;height:17px;"><span>8</span></div>
<div class="c cb tx lft" style="left:86px;top:326px;width:106px;height:17px;"><span>2025.04 сар</span></div>
<div class="c cb ctr" style="left:193px;top:326px;width:106px;height:17px;"><span>22</span></div>
<div class="c cb acc" style="left:300px;top:326px;width:106px;height:17px;"><span>3,150,000.00</span></div>
<div class="c cb acc" style="left:407px;top:326px;width:106px;height:17px;"><span>143,181.82</span></div>
<div class="c cb rgt" style="left:26px;top:344px;width:59px;height:17px;"><span>9</span></div>
<div class="c cb tx lft" style="left:86px;top:344px;width:106px;height:17px;"><span>2025.05 сар</span></div>
<div class="c cb ctr" style="left:193px;top:344px;width:106px;height:17px;"><span>14</span></div>
<div class="c cb acc" style="left:300px;top:344px;width:106px;height:17px;"><span>2,004,545.45</span></div>
<div class="c cb acc" style="left:407px;top:344px;width:106px;height:17px;"><span>143,181.82</span></div>
<div class="c cb rgt" style="left:26px;top:362px;width:59px;height:17px;"><span>10</span></div>
<div class="c cb tx lft" style="left:86px;top:362px;width:106px;height:17px;"><span>2025.06 сар</span></div>
<div class="c cb ctr" style="left:193px;top:362px;width:106px;height:17px;"><span>20</span></div>
<div class="c cb acc" style="left:300px;top:362px;width:106px;height:17px;"><span>3,150,000.00</span></div>
<div class="c cb acc" style="left:407px;top:362px;width:106px;height:17px;"><span>157,500.00</span></div>
<div class="c cb rgt" style="left:26px;top:380px;width:59px;height:17px;"><span>11</span></div>
<div class="c cb tx lft" style="left:86px;top:380px;width:106px;height:17px;"><span>Нийт</span></div>
<div class="c cb ctr" style="left:193px;top:380px;width:106px;height:17px;"><span>200</span></div>
<div class="c cb acc" style="left:300px;top:380px;width:106px;height:17px;"><span>30,354,545.45</span></div>
<div class="c cb rgt" style="left:26px;top:416px;width:59px;height:17px;"><span>1</span></div>
<div class="c ab a14 ctr bg" style="left:86px;top:416px;width:213px;height:17px;letter-spacing:0.10px;"><span>Нийт ажилласан хоног</span></div>
<div class="c cb rgt" style="left:300px;top:416px;width:106px;height:17px;"><span>200</span></div>
<div class="c cb rgt" style="left:26px;top:434px;width:59px;height:17px;"><span>2</span></div>
<div class="c ab a14 ctr bg" style="left:86px;top:434px;width:213px;height:17px;letter-spacing:0.08px;"><span>Нийт цалин</span></div>
<div class="c cb acc" style="left:300px;top:434px;width:106px;height:17px;"><span>30,354,545.45</span></div>
<div class="c cb rgt" style="left:26px;top:452px;width:59px;height:17px;"><span>3</span></div>
<div class="c ab a14 ctr bg" style="left:86px;top:452px;width:213px;height:17px;letter-spacing:0.08px;"><span>Өдрийн дундаж цалин</span></div>
<div class="c cb acc" style="left:300px;top:452px;width:106px;height:17px;"><span>151,772.73</span></div>
<div class="c cb rgt" style="left:26px;top:470px;width:59px;height:17px;"><span>4</span></div>
<div class="c ab a14 ctr bg" style="left:86px;top:470px;width:213px;height:17px;letter-spacing:0.10px;"><span>Ээлжийн амралтын хоног</span></div>
<div class="c cb rgt" style="left:300px;top:470px;width:106px;height:17px;"><span>15</span></div>
<div class="c cb rgt" style="left:26px;top:488px;width:59px;height:17px;"><span>5</span></div>
<div class="c ab a14 ctr bg" style="left:86px;top:488px;width:213px;height:17px;letter-spacing:0.12px;"><span>Ээлжийн амралтын цалин</span></div>
<div class="c cb acc" style="left:300px;top:488px;width:106px;height:17px;"><span>2,276,590.91</span></div>
<div class="c cb ctr bg" style="left:193px;top:542px;width:213px;height:17px;letter-spacing:-0.08px;"><span>Гүйцэтгэх захирал</span></div>
<div class="c cb ctr bg" style="left:193px;top:578px;width:213px;height:17px;letter-spacing:0.09px;"><span>Нягтлан бодогч</span></div>
<i class="bh" style="left:25px;top:92px;width:810px"></i>
<i class="bh" style="left:25px;top:110px;width:810px"></i>
<i class="bh" style="left:25px;top:128px;width:810px"></i>
<i class="bv" style="left:25px;top:92px;height:37px"></i>
<i class="bv" style="left:85px;top:92px;height:37px"></i>
<i class="bv" style="left:192px;top:92px;height:37px"></i>
<i class="bv" style="left:299px;top:92px;height:37px"></i>
<i class="bv" style="left:406px;top:92px;height:37px"></i>
<i class="bv" style="left:513px;top:92px;height:37px"></i>
<i class="bv" style="left:620px;top:92px;height:37px"></i>
<i class="bv" style="left:727px;top:92px;height:37px"></i>
<i class="bv" style="left:834px;top:92px;height:37px"></i>
<i class="bh" style="left:25px;top:164px;width:489px"></i>
<i class="bh" style="left:25px;top:199px;width:489px"></i>
<i class="bh" style="left:25px;top:217px;width:489px"></i>
<i class="bh" style="left:25px;top:235px;width:489px"></i>
<i class="bh" style="left:25px;top:253px;width:489px"></i>
<i class="bh" style="left:25px;top:271px;width:489px"></i>
<i class="bh" style="left:25px;top:289px;width:489px"></i>
<i class="bh" style="left:25px;top:307px;width:489px"></i>
<i class="bh" style="left:25px;top:325px;width:489px"></i>
<i class="bh" style="left:25px;top:343px;width:489px"></i>
<i class="bh" style="left:25px;top:361px;width:489px"></i>
<i class="bh" style="left:25px;top:379px;width:489px"></i>
<i class="bh" style="left:25px;top:397px;width:489px"></i>
<i class="bv" style="left:25px;top:164px;height:234px"></i>
<i class="bv" style="left:85px;top:164px;height:234px"></i>
<i class="bv" style="left:192px;top:164px;height:234px"></i>
<i class="bv" style="left:299px;top:164px;height:234px"></i>
<i class="bv" style="left:406px;top:164px;height:234px"></i>
<i class="bv" style="left:513px;top:164px;height:234px"></i>
<i class="bh" style="left:25px;top:415px;width:382px"></i>
<i class="bh" style="left:25px;top:433px;width:382px"></i>
<i class="bh" style="left:25px;top:451px;width:382px"></i>
<i class="bh" style="left:25px;top:469px;width:382px"></i>
<i class="bh" style="left:25px;top:487px;width:382px"></i>
<i class="bh" style="left:25px;top:505px;width:382px"></i>
<i class="bv" style="left:25px;top:415px;height:91px"></i>
<i class="bv" style="left:85px;top:415px;height:91px"></i>
<i class="bv" style="left:299px;top:415px;height:91px"></i>
<i class="bv" style="left:406px;top:415px;height:91px"></i>
</div>
<div id="sbar">
  <svg style="left:31px;top:12px" width="9" height="15" viewBox="0 0 9 15"><path d="M8 1L1.500 7.500L8 14" fill="none" stroke="#a6a6a6" stroke-width="1.400"/></svg>
  <svg style="left:72px;top:12px" width="9" height="15" viewBox="0 0 9 15"><path d="M1 1L7.500 7.500L1 14" fill="none" stroke="#a6a6a6" stroke-width="1.400"/></svg>
  <div id="stab"><span>Sheet1</span><i></i></div>
  <i id="ssep"></i>
  <svg style="left:271px;top:12px" width="15" height="15" viewBox="0 0 15 15"><path d="M7.500 .5V14.500M.5 7.500H14.500" stroke="#333" stroke-width="1.500"/></svg>
</div>
</body>
</html>
